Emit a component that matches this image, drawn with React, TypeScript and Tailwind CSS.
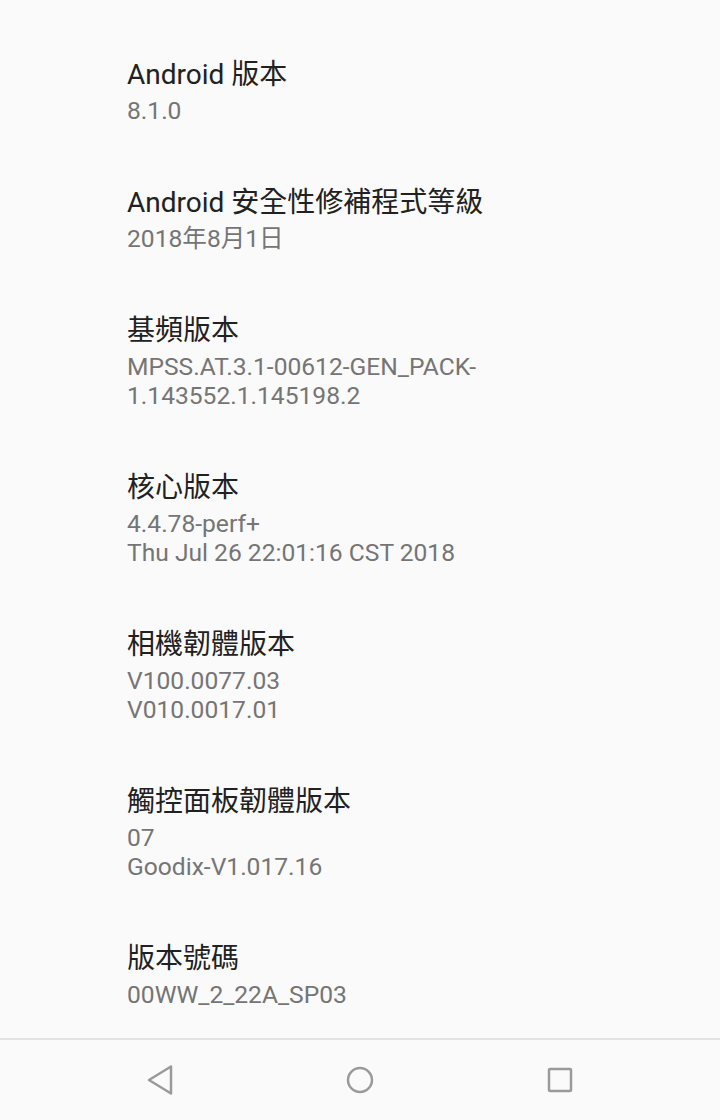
import React from 'react';

type Item = { title: string; summary: string[] };

const items: Item[] = [
  { title: 'Android 版本', summary: ['8.1.0'] },
  { title: 'Android 安全性修補程式等級', summary: ['2018年8月1日'] },
  { title: '基頻版本', summary: ['MPSS.AT.3.1-00612-GEN_PACK-', '1.143552.1.145198.2'] },
  { title: '核心版本', summary: ['4.4.78-perf+', 'Thu Jul 26 22:01:16 CST 2018'] },
  { title: '相機韌體版本', summary: ['V100.0077.03', 'V010.0017.01'] },
  { title: '觸控面板韌體版本', summary: ['07', 'Goodix-V1.017.16'] },
  { title: '版本號碼', summary: ['00WW_2_22A_SP03'] },
];

const font = { fontFamily: 'Roboto, "Noto Sans CJK TC", sans-serif' };

function NavBar() {
  return (
    <div className="h-[82px] border-t-2 border-[#e2e2e2] bg-[#fafafa] flex items-center pl-[60px]">
      <div className="w-[200px] flex justify-center">
        <svg width="28" height="30" viewBox="0 0 28 30" fill="none" stroke="#9a9a9a" strokeWidth="2.5" strokeLinejoin="round">
          <path d="M25 1.5 L3 15 L25 28.5 Z" />
        </svg>
      </div>
      <div className="w-[200px] flex justify-center">
        <svg width="30" height="30" viewBox="0 0 30 30" fill="none" stroke="#9a9a9a" strokeWidth="2.5">
          <circle cx="15" cy="15" r="12" />
        </svg>
      </div>
      <div className="w-[200px] flex justify-center">
        <svg width="26" height="26" viewBox="0 0 26 26" fill="none" stroke="#9a9a9a" strokeWidth="2.5">
          <rect x="2" y="2" width="22" height="22" rx="1" />
        </svg>
      </div>
    </div>
  );
}

export default function App() {
  return (
    <div className="w-[720px] h-[1120px] bg-[#fafafa] flex flex-col overflow-hidden" style={font}>
      <div className="flex-1 pt-[26px] pl-[127px] overflow-hidden">
        {items.map((item) => (
          <div key={item.title} className="pt-[28px] pb-[29px]">
            <div className="text-[28px] leading-[42px] text-[#212121]">{item.title}</div>
            {item.summary.map((line) => (
              <div key={line} className="text-[24.6px] leading-[29px] text-[#757575]">
                {line}
              </div>
            ))}
          </div>
        ))}
      </div>
      <NavBar />
    </div>
  );
}
